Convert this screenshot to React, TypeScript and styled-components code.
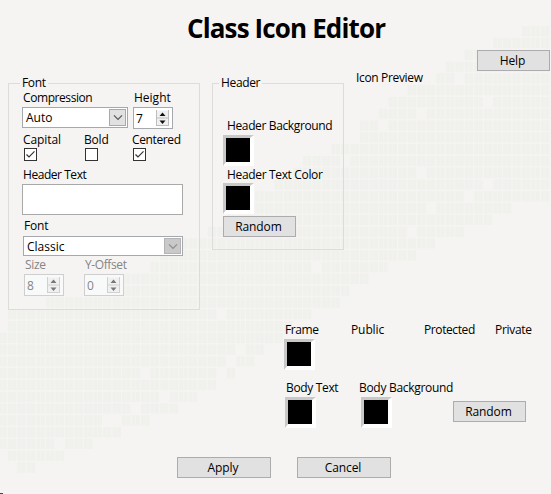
import React from 'react';
import styled, { createGlobalStyle } from 'styled-components';

const GlobalStyle = createGlobalStyle`
  body { margin: 0; background: #f5f4f2; }
  * { box-sizing: border-box; }
`;

const Window = styled.main`
  position: relative;
  isolation: isolate;
  width: 551px;
  height: 494px;
  overflow: hidden;
  background: #f5f4f2;
  color: #000;
  font: 12px/16px 'Open Sans', 'Noto Sans', sans-serif;
  white-space: nowrap;
`;

const Backdrop = styled.svg`
  position: absolute;
  inset: 0;
  z-index: -1;
`;

const Title = styled.h1`
  height: 50px;
  margin: 0;
  padding: 10px 0 0 187px;
  color: #000;
  font-size: 26px;
  line-height: 36px;
  font-weight: 700;
  letter-spacing: -0.87px;
`;

const Toolbar = styled.div`
  display: flex;
  justify-content: flex-end;
  height: 21px;
  padding-right: 1px;
`;

const Button = styled.button<{ $width: number }>`
  width: ${p => p.$width}px;
  height: 21px;
  padding: 0 2px 0 0;
  border: 1px solid #acacac;
  background: #e1e1e1;
  color: #000;
  font: inherit;
  line-height: 18px;
  letter-spacing: -0.1px;
`;

const Panels = styled.div`
  display: flex;
  align-items: flex-start;
  height: 251px;
  padding: 4px 0 0 8px;
`;

const Group = styled.fieldset<{ $width: number; $height: number }>`
  width: ${p => p.$width}px;
  height: ${p => p.$height}px;
  margin: 0 12px 0 0;
  padding: 0;
  border: 1px solid #dcdcda;
  min-width: 0;
`;

const Legend = styled.legend<{ $indent: number }>`
  height: 16px;
  margin-left: ${p => p.$indent}px;
  padding: 0 2px;
  letter-spacing: -0.35px;
`;

const Stack = styled.div<{ $indent?: number; $top?: number }>`
  display: flex;
  flex-direction: column;
  align-items: flex-start;
  padding: ${p => p.$top ?? 0}px 0 0 ${p => p.$indent ?? 0}px;
`;

const Row = styled.div<{ $height: number }>`
  display: flex;
  align-items: flex-start;
  height: ${p => p.$height}px;
`;

const Cell = styled.div<{ $width: number }>`
  width: ${p => p.$width}px;
  flex: none;
`;

const Label = styled.div<{ $muted?: boolean; $indent?: number; $track?: number; $tight?: boolean }>`
  height: 16px;
  line-height: ${p => (p.$tight ? 14 : 16)}px;
  padding-left: ${p => p.$indent ?? 0}px;
  color: ${p => (p.$muted ? '#858585' : 'inherit')};
  letter-spacing: ${p => p.$track ?? 0}px;
`;

const PreviewLabel = styled(Label)`
  margin-top: -5px;
`;

const Select = styled.div<{ $width: number; $height: number }>`
  display: flex;
  justify-content: space-between;
  width: ${p => p.$width}px;
  height: ${p => p.$height}px;
  padding: 1px 1px 1px 3px;
  border: 1px solid #a5a9ad;
  background: #fff;
  line-height: 18px;
`;

const DropButton = styled.span<{ $muted?: boolean }>`
  display: grid;
  place-items: center;
  width: 17px;
  border: 1px solid ${p => (p.$muted ? '#b4b4b4' : '#a9a9a9')};
  background: ${p => (p.$muted ? '#c9c9c9' : '#e1e1e1')};
  color: ${p => (p.$muted ? '#8d8d8d' : '#555')};
`;

const Spinner = styled.div<{ $muted?: boolean }>`
  display: flex;
  justify-content: space-between;
  width: 40px;
  height: 22px;
  padding: 2px 3px 2px 2px;
  border: 1px solid ${p => (p.$muted ? '#cfcfcf' : '#a5a9ad')};
  background: ${p => (p.$muted ? '#f8fafa' : '#fff')};
  color: ${p => (p.$muted ? '#858585' : '#000')};
  line-height: 17px;
`;

const CheckBox = styled.span`
  display: grid;
  place-items: center;
  width: 13px;
  height: 13px;
  border: 1px solid #333;
  background: #fff;
`;

const TextField = styled.input`
  width: 161px;
  height: 31px;
  padding: 2px;
  border: 1px solid #a9a9a9;
  background: #fff;
`;

const Swatch = styled.div`
  width: 31px;
  height: 31px;
  border: solid;
  border-width: 3px 4px 4px 3px;
  border-color: #c8c8c8 #fff #fff #c8c8c8;
  background: #000;
  background-clip: padding-box;
`;

const Colors = styled.section`
  height: 135px;
  padding-left: 284px;
`;

const Actions = styled.footer`
  display: flex;
  gap: 26px;
  padding-left: 177px;
`;

const PITCH_X = 9.52;
const PITCH_Y = 11.79;
const BAND: [number, number][] = [
  [522, 551], [493, 551], [464, 551], [446, 551], [436, 551], [407, 551], [388, 551],
  [378, 551], [360, 551], [350, 551], [332, 551], [304, 551], [294, 551], [276, 551],
  [256, 551], [247, 510], [228, 492], [208, 464], [180, 435], [160, 415], [150, 387],
  [112, 368], [93, 349], [46, 340], [8, 312], [8, 293], [0, 283], [0, 265], [0, 255],
  [0, 236], [0, 217], [0, 197], [0, 178], [0, 150], [0, 121], [0, 92], [8, 63], [17, 35],
];
const GAPS = ['4-48', '5-42', '6-51', '7-44', '8-40', '9-37', '11-36', '12-44', '13-51', '14-49', '15-45', '17-43', '20-33', '24-23', '27-25', '28-24', '29-23', '29-15', '31-17', '32-14', '33-11', '33-12', '35-6'];

function Mosaic() {
  return (
    <Backdrop width="551" height="494" aria-hidden>
      {BAND.map(([start, end], row) => {
        const y = 26.2 + row * PITCH_Y;
        const first = Math.round((start + 1.7) / PITCH_X);
        const last = Math.round((end + 1.7) / PITCH_X);
        return Array.from({ length: last - first }, (_, i) => first + i)
          .filter(col => !GAPS.includes(`${row}-${col}`))
          .map(col => (
            <g key={`${row}-${col}`} transform={`translate(${col * PITCH_X - 1.7} ${y})`}>
              <rect width="8.4" height="10.2" fill="#f0f0ec" />
              <path d="M4.1 0v10.2" stroke="#f2f2ef" />
            </g>
          ));
      })}
      <path d="M0 493h3v1H0z" fill="#444" />
    </Backdrop>
  );
}

const Chevron = () => (
  <svg width="10" height="7" viewBox="0 0 10 7" fill="none" stroke="currentColor" strokeWidth="1.2">
    <path d="M1 1.3 5 5.3 9 1.3" />
  </svg>
);

const Arrows = ({ muted }: { muted?: boolean }) => (
  <svg width="13" height="17" viewBox="0 0 13 17">
    <path d="M0 .5h13v15.5H0z" fill="#f0f0f0" />
    <path d="M.5 0v16M12.5 0v16M0 8h13M0 15.5h13" stroke={muted ? '#d0d0d0' : '#bdbdbd'} />
    <path d="M3.5 6 6.5 2.5 9.5 6zM3.5 10.5h6L6.5 14z" fill={muted ? '#777' : '#111'} />
  </svg>
);

const Check = () => (
  <svg width="11" height="11" viewBox="0 0 11 11" fill="none" stroke="#333" strokeWidth="1.2">
    <path d="M1.5 5.5 4 8 9.5 2.3" />
  </svg>
);

export default function App() {
  return (
    <Window>
      <GlobalStyle />
      <Mosaic />
      <Title>Class Icon Editor</Title>
      <Toolbar><Button $width={73}>Help</Button></Toolbar>
      <Panels>
        <Group $width={192} $height={235}>
          <Legend $indent={11}>Font</Legend>
          <Stack $indent={13}>
            <Row $height={16}>
              <Cell $width={111}><Label $tight $indent={1} $track={-0.42}>Compression</Label></Cell>
              <Label $tight $indent={1}>Height</Label>
            </Row>
            <Row $height={25}>
              <Cell $width={111}>
                <Select $width={106} $height={21}>Auto<DropButton><Chevron /></DropButton></Select>
              </Cell>
              <Spinner>7<Arrows /></Spinner>
            </Row>
            <Row $height={16}>
              <Cell $width={61}><Label $indent={1} $track={-0.1}>Capital</Label></Cell>
              <Cell $width={49}><Label $indent={1} $track={-0.2}>Bold</Label></Cell>
              <Label $track={-0.38}>Centered</Label>
            </Row>
            <Row $height={19}>
              <Cell $width={61}><Stack $indent={2}><CheckBox><Check /></CheckBox></Stack></Cell>
              <Cell $width={48}><Stack $indent={2}><CheckBox /></Stack></Cell>
              <Stack $indent={2}><CheckBox><Check /></CheckBox></Stack>
            </Row>
            <Row $height={17}><Label $indent={1} $track={-0.45}>Header Text</Label></Row>
            <Row $height={34}><TextField aria-label="Header Text" /></Row>
            <Row $height={18}><Label $indent={2} $track={-0.2}>Font</Label></Row>
            <Stack $indent={1}>
              <Row $height={21}>
                <Select $width={160} $height={20}>Classic<DropButton $muted><Chevron /></DropButton></Select>
              </Row>
            </Stack>
            <Stack $indent={2}>
              <Row $height={17}>
                <Cell $width={60}><Label $muted $indent={1} $track={-0.3}>Size</Label></Cell>
                <Label $muted $indent={1} $track={-0.4}>Y-Offset</Label>
              </Row>
              <Row $height={22}>
                <Cell $width={60}><Spinner $muted>8<Arrows muted /></Spinner></Cell>
                <Spinner $muted>0<Arrows muted /></Spinner>
              </Row>
            </Stack>
          </Stack>
        </Group>
        <Group $width={132} $height={175}>
          <Legend $indent={6}>Header</Legend>
          <Stack $indent={10} $top={27}>
            <Label $indent={4} $track={-0.37}>Header Background</Label>
            <Stack $top={1}><Row $height={32}><Swatch /></Row></Stack>
            <Label $indent={4} $track={-0.34}>Header Text Color</Label>
            <Row $height={33}><Swatch /></Row>
            <Button $width={73}>Random</Button>
          </Stack>
        </Group>
        <PreviewLabel $track={-0.34}>Icon Preview</PreviewLabel>
      </Panels>
      <Colors>
        <Row $height={17}>
          <Cell $width={66}><Label $indent={1} $track={-0.4}>Frame</Label></Cell>
          <Cell $width={73}><Label $indent={1} $track={-0.1}>Public</Label></Cell>
          <Cell $width={71}><Label $indent={1} $track={-0.4}>Protected</Label></Cell>
          <Label $indent={1} $track={-0.3}>Private</Label>
        </Row>
        <Row $height={41}><Swatch /></Row>
        <Row $height={17}>
          <Cell $width={74}><Label $indent={2} $track={-0.34}>Body Text</Label></Cell>
          <Label $indent={1} $track={-0.3}>Body Background</Label>
        </Row>
        <Row $height={34}>
          <Cell $width={77}><Stack $indent={1}><Swatch /></Stack></Cell>
          <Cell $width={92}><Swatch /></Cell>
          <Stack $top={4}><Button $width={73}>Random</Button></Stack>
        </Row>
      </Colors>
      <Actions>
        <Button $width={94}>Apply</Button>
        <Button $width={94}>Cancel</Button>
      </Actions>
    </Window>
  );
}
